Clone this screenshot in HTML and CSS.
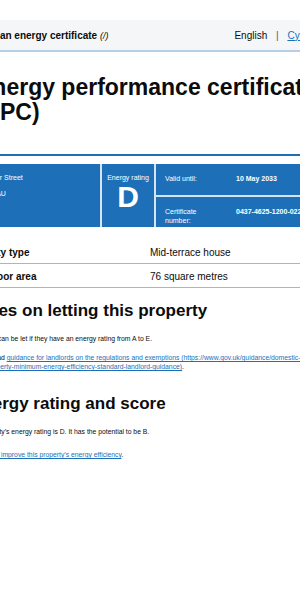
FILE: index.html
```html
<!DOCTYPE html>
<html lang="en">
<head>
  <meta charset="UTF-8" />
  <meta name="viewport" content="width=device-width, initial-scale=1.0"/>
  <title>Energy performance certificate (EPC)</title>
  <link rel="stylesheet" href="styles.css">
</head>
<body>
  <div class="page">
    <div class="service-bar">
      <div class="service-name"><strong>Find an energy certificate</strong> <em>(/)</em></div>
      <div class="lang-switch">
        <span>English</span>
        <span class="lang-sep">|</span>
        <a href="#">Cymraeg</a>
      </div>
    </div>

    <h1 class="page-title">Energy performance certificate (EPC)</h1>
    <hr class="title-rule">

    <div class="epc-summary">
      <div class="epc-address">
        <div class="addr-line">12 Water Street</div>
        <div class="addr-line">LS12 4AU</div>
      </div>
      <div class="epc-rating">
        <div class="rating-label">Energy rating</div>
        <div class="rating-letter">D</div>
      </div>
      <div class="epc-meta">
        <div class="meta-row">
          <div class="meta-key">Valid until:</div>
          <div class="meta-value">10 May 2033</div>
        </div>
        <div class="meta-row">
          <div class="meta-key">Certificate number:</div>
          <div class="meta-value">0437-4625-1200-0221-2206</div>
        </div>
      </div>
    </div>

    <div class="summary-list">
      <div class="summary-row">
        <div class="summary-key">Property type</div>
        <div class="summary-value">Mid-terrace house</div>
      </div>
      <div class="summary-row">
        <div class="summary-key">Total floor area</div>
        <div class="summary-value">76 square metres</div>
      </div>
    </div>

    <h2 class="section-title">Rules on letting this property</h2>
    <p class="body-text">Properties can be let if they have an energy rating from A to E.</p>
    <p class="body-text">You can read <a href="#">guidance for landlords on the regulations and exemptions (https://www.gov.uk/guidance/domestic-private-rented-property-minimum-energy-efficiency-standard-landlord-guidance)</a>.</p>

    <h2 class="section-title">Energy rating and score</h2>
    <p class="body-text">This property’s energy rating is D. It has the potential to be B.</p>
    <p class="body-text spaced">See <a href="#">how to improve this property’s energy efficiency</a>.</p>
  </div>
</body>
</html>
```

FILE: styles.css
```css
html, body { overflow: hidden; }
body { margin: 0; background: #fff; color: #0b0c0c; font-family: "Liberation Sans", Arial, sans-serif; }
a { color: #1d70b8; }

.page { margin-left: -35px; width: 375px; }

.service-bar { margin-top: 20px; height: 30px; padding: 0 12px 0 11px; background: #f4f6f8; border-bottom: 2px solid #b6cee6; display: flex; align-items: center; justify-content: space-between; font-size: 10px; }
.service-name em { font-size: 9px; }
.lang-sep { margin: 0 6px; color: #505a5f; }

.page-title { margin: 23px 0 0 12px; max-width: 355px; font-size: 23px; line-height: 25px; font-weight: bold; }
.title-rule { margin: 29px 0 0; border: 0; border-top: 2px solid #1d70b8; width: 400px; }

.epc-summary { margin-top: 8px; width: 420px; height: 63px; display: grid; grid-template-columns: 135px 52px 1fr; gap: 2px; background: #d6e4f2; color: #fff; font-size: 7px; line-height: 9px; }
.epc-address, .epc-rating { background: #1d70b8; padding-top: 9px; }
.epc-address { padding-left: 9px; }
.addr-line { margin-bottom: 7px; }
.epc-rating { text-align: center; }
.rating-letter { font-size: 30px; line-height: 30px; font-weight: bold; }
.epc-meta { display: grid; grid-template-rows: 31px 30px; gap: 2px; }
.meta-row { background: #1d70b8; padding: 10px 0 0 9px; display: grid; grid-template-columns: 40px 1fr; column-gap: 31px; }
.meta-value { font-weight: bold; }

.summary-list { margin-top: 13px; font-size: 10px; line-height: 10px; }
.summary-row { display: flex; padding: 8px 0 5px; border-bottom: 1px solid #b1b4b6; }
.summary-key { width: 185px; font-weight: bold; }

.section-title { margin: 13px 0 0 6px; font-size: 17px; line-height: 20px; font-weight: bold; }
.body-text { margin: 13px 0 0; font-size: 6.8px; line-height: 9px; }
.body-text + .body-text { margin-top: 10px; }
.section-title + .body-text { margin-top: 13px; }
.body-text + .section-title { margin-top: 23px; }
.body-text.spaced { margin-top: 14px; }
```
